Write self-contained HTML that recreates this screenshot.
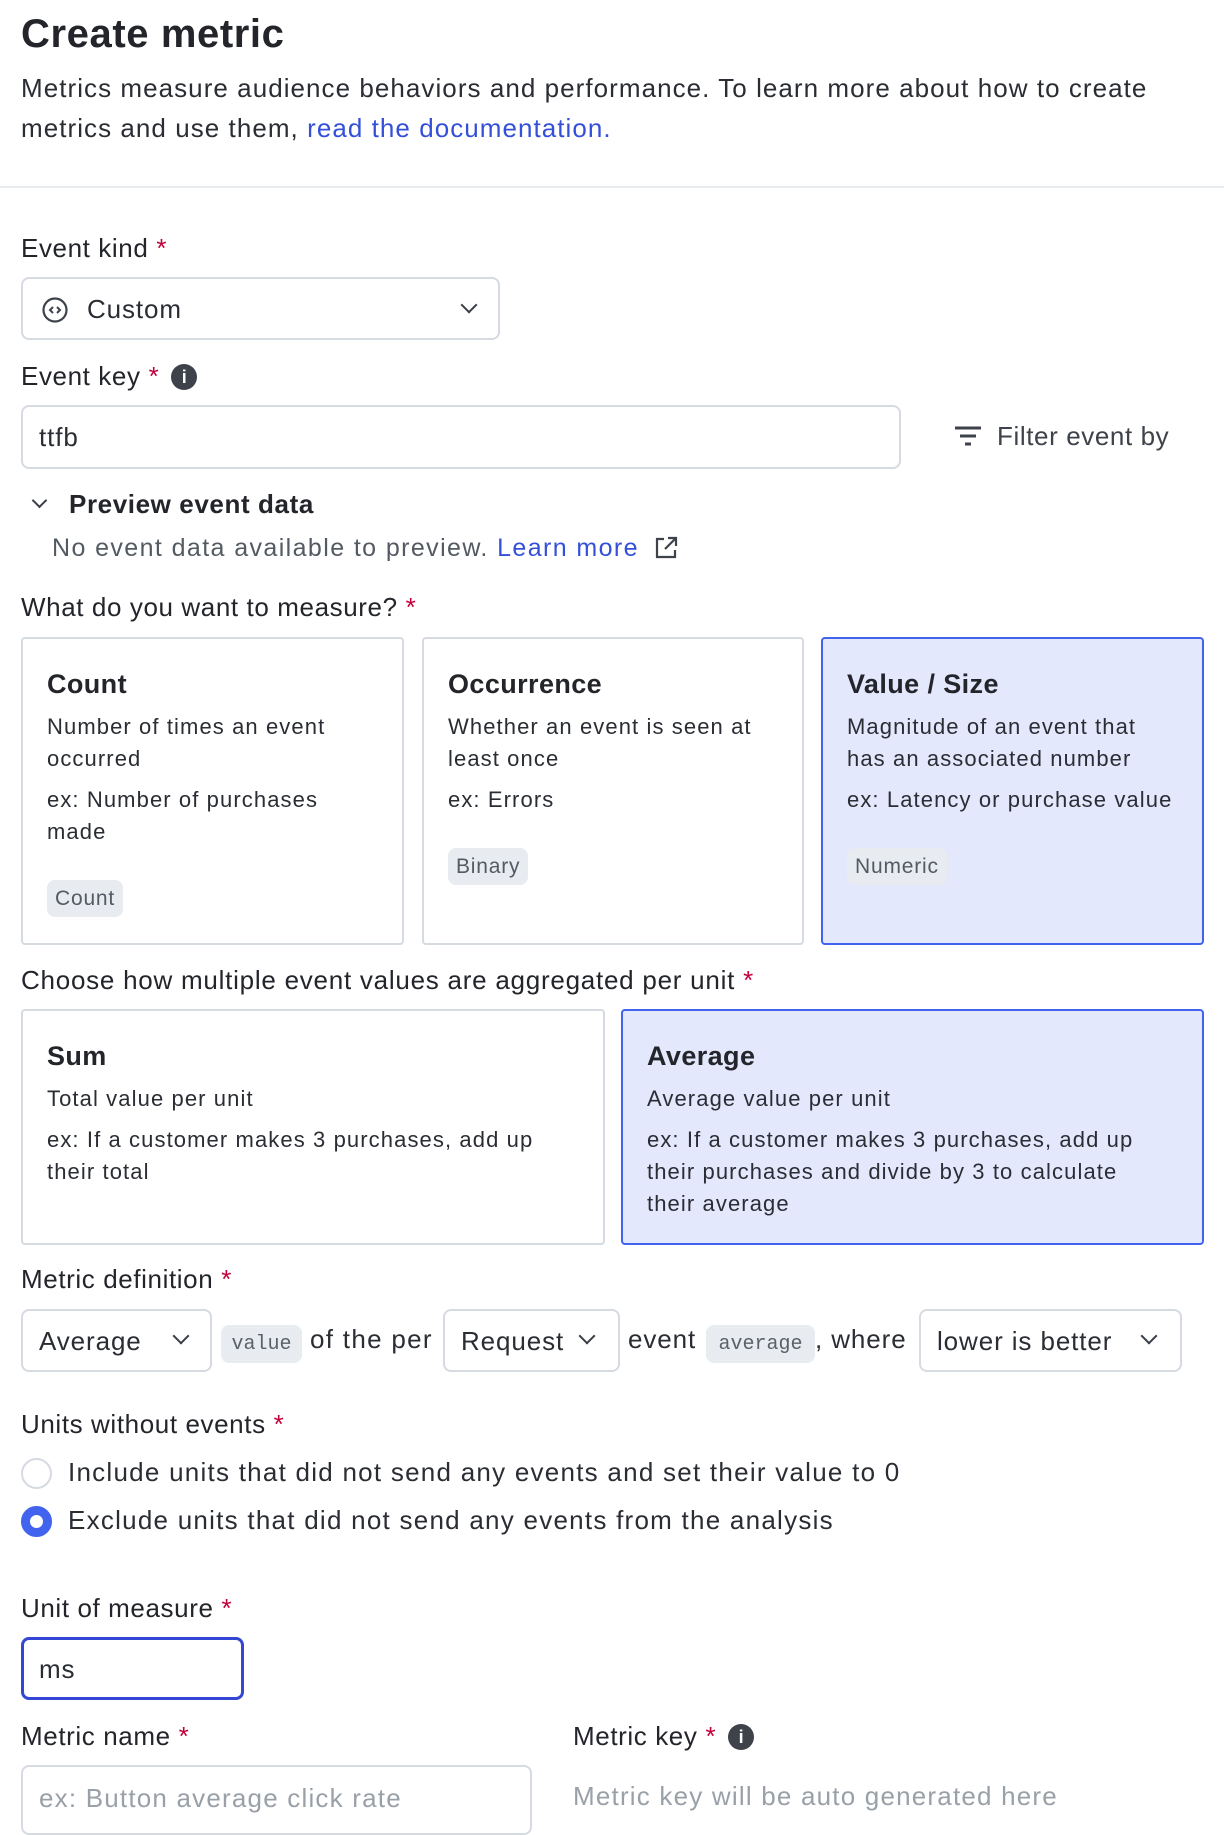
<!DOCTYPE html>
<html><head><meta charset="utf-8"><style>
*{box-sizing:border-box;margin:0;padding:0}
body{width:1224px;height:1806px;overflow:hidden;background:#fff;font-family:"Liberation Sans",sans-serif;color:#23252b;position:relative}
.a{position:absolute;white-space:nowrap}
.lbl{font-size:26px;letter-spacing:0.6px;color:#23252b}
.req{color:#c3003b;margin-left:8px}
.box{position:absolute;border:2px solid #d6dbe1;border-radius:8px;background:#fff}
.card{position:absolute;border:2px solid #d6dbe1;border-radius:4px;background:#fff}
.card.sel{background:#e4e8fd;border-color:#4263ee}
.card h3{position:absolute;left:24px;font-size:27px;font-weight:bold;letter-spacing:0.4px;color:#23252b}
.card p{position:absolute;left:24px;font-size:22px;line-height:32px;letter-spacing:1.1px;color:#2a2d33;white-space:nowrap}
.tag{position:absolute;left:24px;background:#e8ebef;border-radius:8px;font-size:21px;color:#545a63;padding:0 8px;height:37px;line-height:37px;letter-spacing:0.8px}
.chev{position:absolute;width:12px;height:12px;border-right:2px solid #3a3e46;border-bottom:2px solid #3a3e46;transform:rotate(45deg)}
.t{font-size:26px;color:#2a2d33;letter-spacing:0.9px}
.code{position:absolute;background:#e8ebef;border-radius:8px;font-family:"Liberation Mono",monospace;font-size:20px;color:#5b616a;height:38px;line-height:40px;text-align:center}
.info{display:inline-block;width:26px;height:26px;border-radius:50%;background:#3d424b;color:#fff;font-size:18px;font-weight:bold;text-align:center;line-height:26px;vertical-align:2px;margin-left:12px;letter-spacing:0}
</style></head><body>

<div class="a" style="left:21px;top:12px;font-size:40px;font-weight:bold;letter-spacing:0.6px">Create metric</div>
<div class="a" style="left:21px;top:68px;font-size:26px;line-height:40px;letter-spacing:1.05px;color:#2a2d33">Metrics measure audience behaviors and performance. To learn more about how to create<br>metrics and use them, <span style="color:#3450d9">read the documentation.</span></div>
<div class="a" style="left:0;top:186px;width:1224px;height:2px;background:#e9ecef"></div>

<div class="a lbl" style="left:21px;top:233px">Event kind<span class="req">*</span></div>
<div class="box" style="left:21px;top:277px;width:479px;height:63px">
  <svg class="a" style="left:18px;top:17px" width="28" height="28" viewBox="0 0 28 28"><circle cx="14" cy="14" r="11.5" fill="none" stroke="#3d424b" stroke-width="2.2"/><path d="M12 11l-3 3 3 3M16 11l3 3-3 3" fill="none" stroke="#3d424b" stroke-width="2"/></svg>
  <div class="a t" style="left:64px;top:15px">Custom</div>
  <div class="chev" style="left:440px;top:20px"></div>
</div>

<div class="a lbl" style="left:21px;top:361px">Event key<span class="req">*</span><span class="info">i</span></div>
<div class="box" style="left:21px;top:405px;width:880px;height:64px">
  <div class="a t" style="left:16px;top:15px">ttfb</div>
</div>
<svg class="a" style="left:953px;top:424px" width="30" height="24" viewBox="0 0 30 24"><path d="M2 4h26M7 12h16M12 20h6" stroke="#3d424b" stroke-width="3"/></svg>
<div class="a" style="left:997px;top:421px;font-size:26px;color:#3d424b;letter-spacing:0.6px">Filter event by</div>

<div class="chev" style="left:34px;top:495px;width:11px;height:11px"></div>
<div class="a" style="left:69px;top:489px;font-size:26px;font-weight:bold;letter-spacing:0.6px">Preview event data</div>
<div class="a" style="left:52px;top:534px;font-size:25px;color:#545a63;letter-spacing:1.4px">No event data available to preview. <span style="color:#3450d9">Learn more</span></div>
<svg class="a" style="left:653px;top:535px" width="26" height="26" viewBox="0 0 26 26"><path d="M11 4H4v18h18v-7M15 3h8v8M23 3L12 14" fill="none" stroke="#3d424b" stroke-width="2.2"/></svg>

<div class="a lbl" style="left:21px;top:592px">What do you want to measure?<span class="req">*</span></div>
<div class="card" style="left:21px;top:637px;width:383px;height:308px">
  <h3 style="top:30px">Count</h3>
  <p style="top:72px">Number of times an event<br>occurred</p>
  <p style="top:145px">ex: Number of purchases<br>made</p>
  <div class="tag" style="top:241px">Count</div>
</div>
<div class="card" style="left:422px;top:637px;width:382px;height:308px">
  <h3 style="top:30px">Occurrence</h3>
  <p style="top:72px">Whether an event is seen at<br>least once</p>
  <p style="top:145px">ex: Errors</p>
  <div class="tag" style="top:209px">Binary</div>
</div>
<div class="card sel" style="left:821px;top:637px;width:383px;height:308px">
  <h3 style="top:30px">Value / Size</h3>
  <p style="top:72px">Magnitude of an event that<br>has an associated number</p>
  <p style="top:145px">ex: Latency or purchase value</p>
  <div class="tag" style="top:209px">Numeric</div>
</div>

<div class="a lbl" style="left:21px;top:965px;letter-spacing:0.75px">Choose how multiple event values are aggregated per unit<span class="req">*</span></div>
<div class="card" style="left:21px;top:1009px;width:584px;height:236px">
  <h3 style="top:30px">Sum</h3>
  <p style="top:72px">Total value per unit</p>
  <p style="top:113px">ex: If a customer makes 3 purchases, add up<br>their total</p>
</div>
<div class="card sel" style="left:621px;top:1009px;width:583px;height:236px">
  <h3 style="top:30px">Average</h3>
  <p style="top:72px">Average value per unit</p>
  <p style="top:113px">ex: If a customer makes 3 purchases, add up<br>their purchases and divide by 3 to calculate<br>their average</p>
</div>

<div class="a lbl" style="left:21px;top:1264px">Metric definition<span class="req">*</span></div>
<div class="box" style="left:21px;top:1309px;width:191px;height:63px"><div class="a t" style="left:16px;top:15px">Average</div><div class="chev" style="left:152px;top:19px"></div></div>
<div class="code" style="left:221px;top:1325px;width:81px">value</div>
<div class="a t" style="left:310px;top:1324px;letter-spacing:1.3px">of the per</div>
<div class="box" style="left:443px;top:1309px;width:177px;height:63px"><div class="a t" style="left:16px;top:15px">Request</div><div class="chev" style="left:136px;top:19px"></div></div>
<div class="a t" style="left:628px;top:1324px">event</div>
<div class="code" style="left:706px;top:1325px;width:109px">average</div>
<div class="a t" style="left:815px;top:1324px">, where</div>
<div class="box" style="left:919px;top:1309px;width:263px;height:63px"><div class="a t" style="left:16px;top:15px">lower is better</div><div class="chev" style="left:222px;top:19px"></div></div>

<div class="a lbl" style="left:21px;top:1409px">Units without events<span class="req">*</span></div>
<div class="a" style="left:21px;top:1458px;width:31px;height:31px;border:2px solid #d6dbe1;border-radius:50%"></div>
<div class="a t" style="left:68px;top:1457px;letter-spacing:1.25px">Include units that did not send any events and set their value to 0</div>
<div class="a" style="left:21px;top:1506px;width:31px;height:31px;border:9px solid #4263ee;border-radius:50%;background:#fff"></div>
<div class="a t" style="left:68px;top:1505px;letter-spacing:1.25px">Exclude units that did not send any events from the analysis</div>

<div class="a lbl" style="left:21px;top:1593px">Unit of measure<span class="req">*</span></div>
<div class="a" style="left:21px;top:1637px;width:223px;height:63px;border:3px solid #3447d4;border-radius:8px"><div class="a t" style="left:15px;top:14px">ms</div></div>

<div class="a lbl" style="left:21px;top:1721px">Metric name<span class="req">*</span></div>
<div class="a lbl" style="left:573px;top:1721px">Metric key<span class="req">*</span><span class="info">i</span></div>
<div class="box" style="left:21px;top:1765px;width:511px;height:70px"><div class="a t" style="left:16px;top:16px;color:#9aa0a8;letter-spacing:1.2px">ex: Button average click rate</div></div>
<div class="a t" style="left:573px;top:1781px;color:#9aa0a8;letter-spacing:1.2px">Metric key will be auto generated here</div>
</body></html>
